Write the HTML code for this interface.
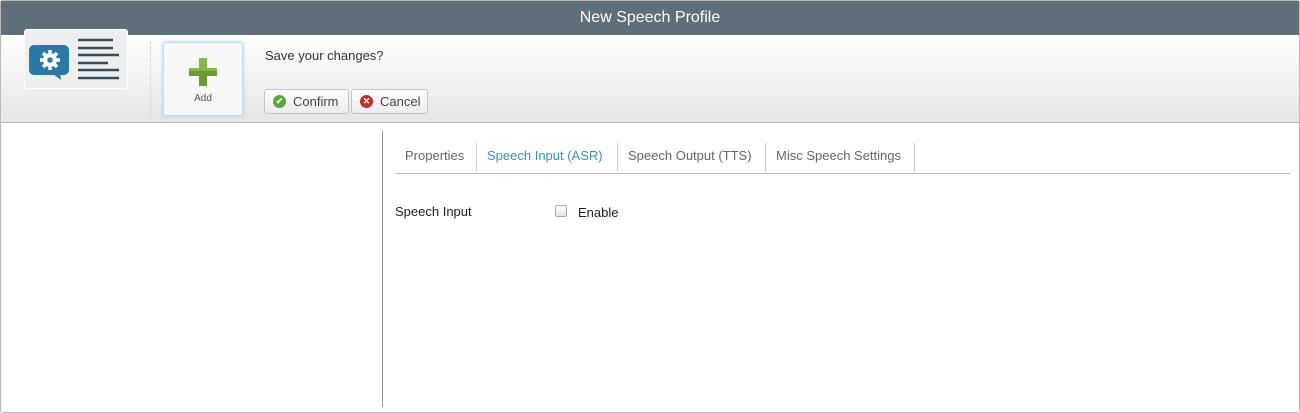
<!DOCTYPE html>
<html><head><style>
*{margin:0;padding:0;box-sizing:border-box}
body{width:1300px;height:413px;background:#fff;font-family:"Liberation Sans",sans-serif;position:relative;overflow:hidden}
.frame{position:absolute;left:0;top:0;width:1300px;height:413px;border:1px solid #b8b8b8;border-radius:3px}
.title{position:absolute;left:1px;top:1px;width:1298px;height:34px;background:#5f6f79;color:#fff;font-size:16px;text-align:center;line-height:34px}
.hdr{position:absolute;left:1px;top:35px;width:1298px;height:88px;background:linear-gradient(#fff,#e6e6e6);border-bottom:1px solid #b5b5b5}
.logo{position:absolute;left:24px;top:29px;width:104px;height:60px;background:#eceef0;border:1px solid #fff;border-radius:3px}
.sep{position:absolute;left:150px;top:42px;height:76px;border-left:1px dotted #ccc}
.add{position:absolute;left:163px;top:42px;width:80px;height:74px;background:#f7f7f7;border:1px solid #bfe0ee;border-radius:3px;box-shadow:0 0 5px #a9d4e8;text-align:center;font-size:10px;color:#555}
.btn{position:absolute;top:89px;height:25px;border:1px solid #c4c4c4;border-radius:3px;background:linear-gradient(#fff,#ececec);font-size:13px;color:#444;line-height:23px;padding-left:28px}
.ic{position:absolute;left:8px;top:5px;width:13px;height:13px;border-radius:50%;color:#fff;font-size:9px;line-height:13px;text-align:center;font-weight:bold}
.tabs{position:absolute;left:395px;top:143px;height:28px;font-size:13px;color:#666}
.tab{position:absolute;top:0;height:28px;line-height:26px;border-right:1px solid #ccc}
</style></head><body>
<div class="frame"></div>
<div class="title">New Speech Profile</div>
<div class="hdr"></div>
<div class="logo">
<svg width="104" height="60" viewBox="0 0 104 60" style="position:absolute;left:0;top:0">
<rect x="4" y="15" width="40" height="30" rx="5" fill="#2b78a5"/>
<path d="M28 44 L36 50 L35 44Z" fill="#2b78a5"/>
<circle cx="25" cy="30" r="7" fill="#fff"/><circle cx="25" cy="30" r="2.8" fill="#2b78a5"/>
<g stroke="#fff" stroke-width="3.5"><line x1="25" y1="20" x2="25" y2="40"/><line x1="15" y1="30" x2="35" y2="30"/><line x1="18" y1="23" x2="32" y2="37"/><line x1="32" y1="23" x2="18" y2="37"/></g>
<circle cx="25" cy="30" r="2.8" fill="#2b78a5"/>
<g stroke="#3c4a55" stroke-width="2.5"><line x1="53" y1="10" x2="88" y2="10"/><line x1="53" y1="18" x2="88" y2="18"/><line x1="53" y1="25" x2="94" y2="25"/><line x1="53" y1="33" x2="83" y2="33"/><line x1="53" y1="40" x2="94" y2="40"/><line x1="53" y1="48" x2="94" y2="48"/></g>
</svg></div>
<div class="sep"></div>
<div class="add"><svg width="30" height="30" viewBox="0 0 30 30" style="position:absolute;left:24px;top:14px"><path d="M11 1h8v10h10v8H19v10h-8V19H1v-8h10z" fill="#6a9a33"/><path d="M11 1h8v10h10v3H1v-3h10z" fill="#86b548"/></svg><div style="position:absolute;top:50px;width:100%">Add</div></div>
<div style="position:absolute;left:265px;top:48px;font-size:13px;color:#333">Save your changes?</div>
<div class="btn" style="left:264px;width:85px"><span class="ic" style="background:#5aa83c">✔</span>Confirm</div>
<div class="btn" style="left:351px;width:77px"><span class="ic" style="background:#c0302a">✕</span>Cancel</div>
<div style="position:absolute;left:382px;top:131px;height:276px;border-left:1px solid #999"></div>
<div class="tabs">
<div class="tab" style="left:0;width:82px;padding-left:10px">Properties</div>
<div class="tab" style="left:82px;width:141px;padding-left:10px;color:#3b90b8">Speech Input (ASR)</div>
<div class="tab" style="left:223px;width:148px;padding-left:10px">Speech Output (TTS)</div>
<div class="tab" style="left:371px;width:149px;padding-left:10px">Misc Speech Settings</div>
</div>
<div style="position:absolute;left:395px;top:173px;width:895px;border-top:1px solid #bbb"></div>
<div style="position:absolute;left:395px;top:204px;font-size:13px;color:#222">Speech Input</div>
<div style="position:absolute;left:555px;top:205px;width:12px;height:12px;border:1px solid #aaa;border-radius:2px;background:linear-gradient(#fff,#e4e4e4)"></div>
<div style="position:absolute;left:578px;top:205px;font-size:13px;color:#222">Enable</div>
</body></html>
